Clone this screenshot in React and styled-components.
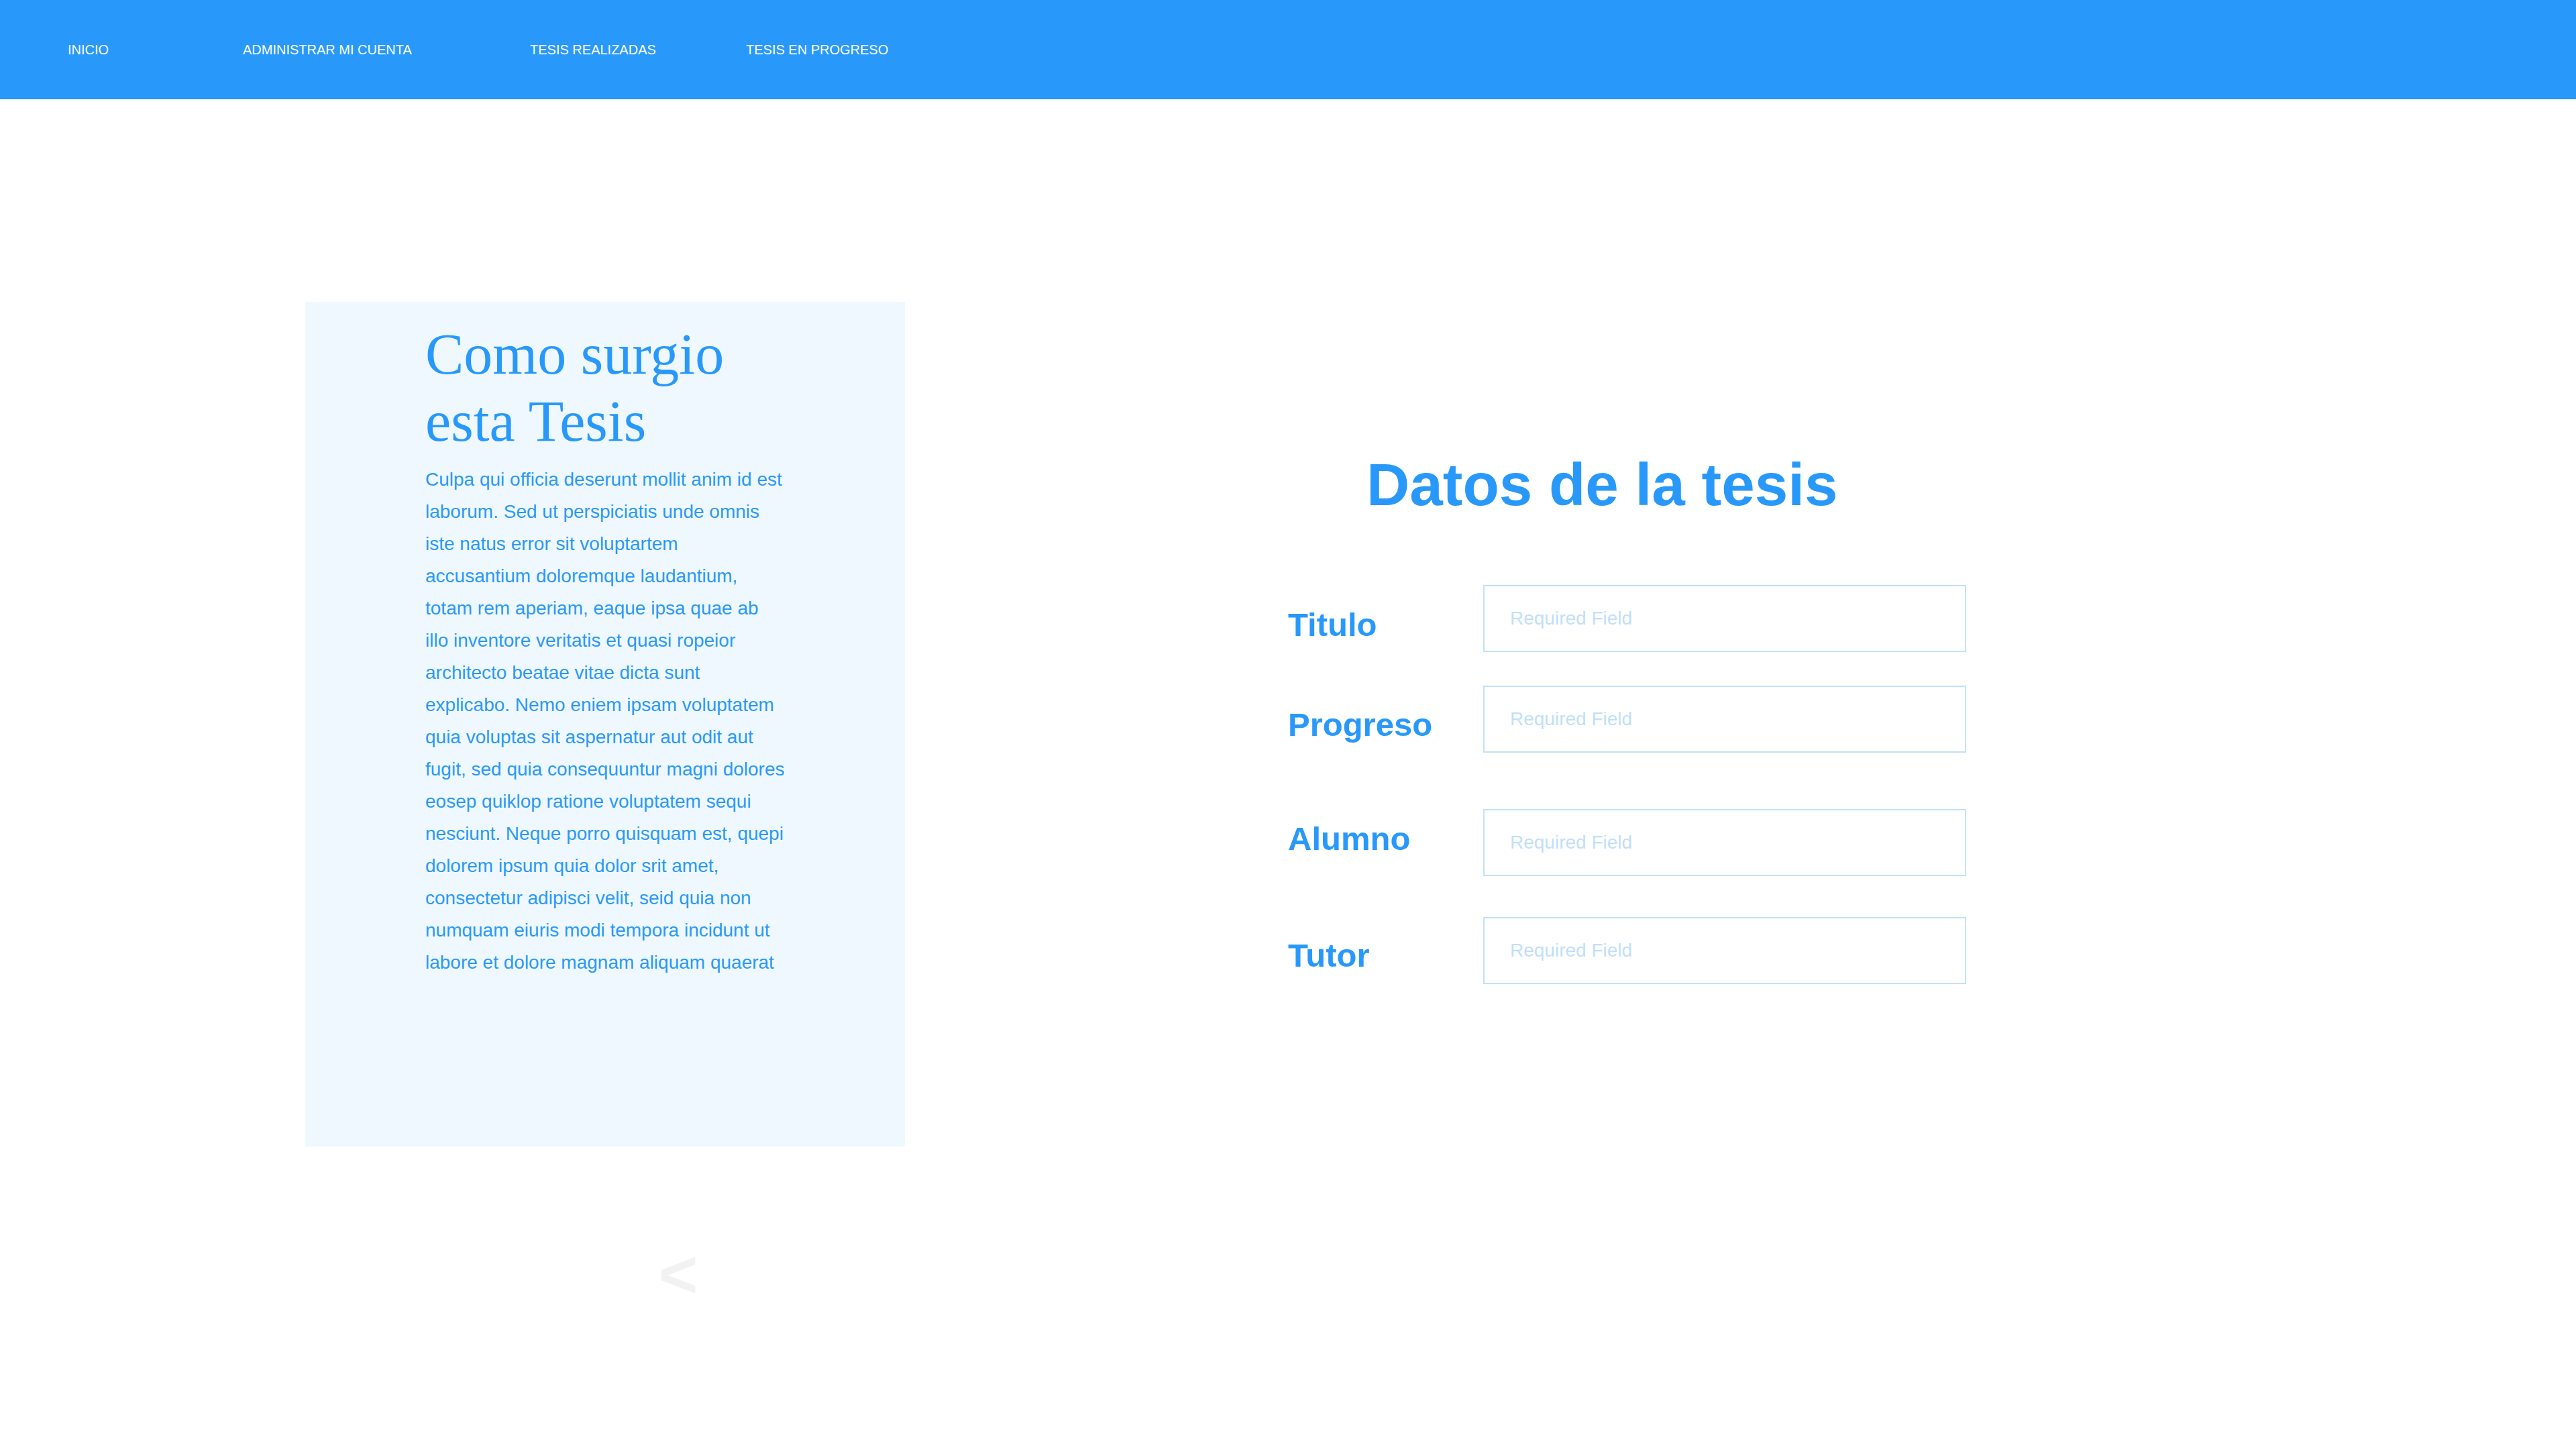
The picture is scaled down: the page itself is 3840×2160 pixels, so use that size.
import React from "react";
import styled, { createGlobalStyle } from "styled-components";

const GlobalStyle = createGlobalStyle`
  html, body {
    margin: 0;
    padding: 0;
    background: #ffffff;
  }
  body {
    font-family: "Liberation Sans", Arial, sans-serif;
  }
  * {
    box-sizing: border-box;
  }
`;

const Page = styled.div`
  min-height: 2160px;
  background: #ffffff;
`;

const NavBar = styled.nav`
  height: 148px;
  background: #2899fa;
  display: grid;
  grid-template-columns: 261px 428px 322px auto;
  align-items: center;
  padding-left: 101px;
`;

const NavLink = styled.a`
  color: #ffffff;
  font-size: 20px;
  line-height: 1;
  text-decoration: none;
  text-transform: uppercase;
  white-space: nowrap;
`;

const Main = styled.main`
  display: flex;
  align-items: flex-start;
  gap: 571px;
  padding: 302px 0 0 455px;
`;

const LeftColumn = styled.div`
  display: flex;
  flex-direction: column;
  width: 894px;
`;

const StoryCard = styled.section`
  width: 894px;
  height: 1259px;
  background: #f0f8ff;
  padding: 28px 179px 0;
`;

const StoryTitle = styled.h2`
  margin: 0;
  font-family: "Liberation Serif", "Times New Roman", serif;
  font-weight: 400;
  font-size: 86px;
  line-height: 100px;
  color: #2899fa;
`;

const StoryText = styled.p`
  margin: 13px 0 0;
  font-size: 28px;
  line-height: 48px;
  color: #2899fa;
`;

const PrevButton = styled.button`
  align-self: flex-start;
  margin: 140px 0 0 527px;
  padding: 0;
  border: none;
  background: none;
  font-family: "Liberation Sans", Arial, sans-serif;
  font-weight: 700;
  font-size: 100px;
  line-height: 100px;
  color: #f2f2f2;
  cursor: pointer;
`;

const FormColumn = styled.section`
  width: 1012px;
  margin-top: 221px;
`;

const FormTitle = styled.h1`
  margin: 0;
  padding-left: 117px;
  font-size: 89px;
  font-weight: 700;
  line-height: 103px;
  color: #2899fa;
`;

const Field = styled.div`
  display: flex;
  align-items: flex-start;
  margin-top: ${(p) => p.$gap}px;
`;

const FieldLabel = styled.label`
  width: 291px;
  margin-top: ${(p) => p.$offset}px;
  font-size: 49px;
  font-weight: 700;
  line-height: 49px;
  color: #2899fa;
`;

const TextInput = styled.input`
  width: 720px;
  height: 100px;
  border: 2px solid #c2e1fb;
  padding: 0 38px;
  font-family: "Liberation Sans", Arial, sans-serif;
  font-size: 28px;
  color: #2899fa;
  background: #ffffff;
  outline: none;

  &::placeholder {
    color: #bfdffb;
  }
`;

const navItems = ["Inicio", "Administrar mi cuenta", "Tesis realizadas", "Tesis en progreso"];

const fields = [
  { label: "Titulo", gap: 98, offset: 35 },
  { label: "Progreso", gap: 50, offset: 34 },
  { label: "Alumno", gap: 84, offset: 20 },
  { label: "Tutor", gap: 61, offset: 33 },
];

const story =
  "Culpa qui officia deserunt mollit anim id est laborum. Sed ut perspiciatis unde omnis iste natus error sit voluptartem accusantium doloremque laudantium, totam rem aperiam, eaque ipsa quae ab illo inventore veritatis et quasi ropeior architecto beatae vitae dicta sunt explicabo. Nemo eniem ipsam voluptatem quia voluptas sit aspernatur aut odit aut fugit, sed quia consequuntur magni dolores eosep quiklop ratione voluptatem sequi nesciunt. Neque porro quisquam est, quepi dolorem ipsum quia dolor srit amet, consectetur adipisci velit, seid quia non numquam eiuris modi tempora incidunt ut labore et dolore magnam aliquam quaerat";

function App() {
  return (
    <Page>
      <GlobalStyle />
      <NavBar>
        {navItems.map((item) => (
          <NavLink key={item} href="#">
            {item}
          </NavLink>
        ))}
      </NavBar>
      <Main>
        <LeftColumn>
          <StoryCard>
            <StoryTitle>Como surgio esta Tesis</StoryTitle>
            <StoryText>{story}</StoryText>
          </StoryCard>
          <PrevButton>&lt;</PrevButton>
        </LeftColumn>
        <FormColumn>
          <FormTitle>Datos de la tesis</FormTitle>
          {fields.map((f) => (
            <Field key={f.label} $gap={f.gap}>
              <FieldLabel $offset={f.offset}>{f.label}</FieldLabel>
              <TextInput placeholder="Required Field" />
            </Field>
          ))}
        </FormColumn>
      </Main>
    </Page>
  );
}

export default App;
